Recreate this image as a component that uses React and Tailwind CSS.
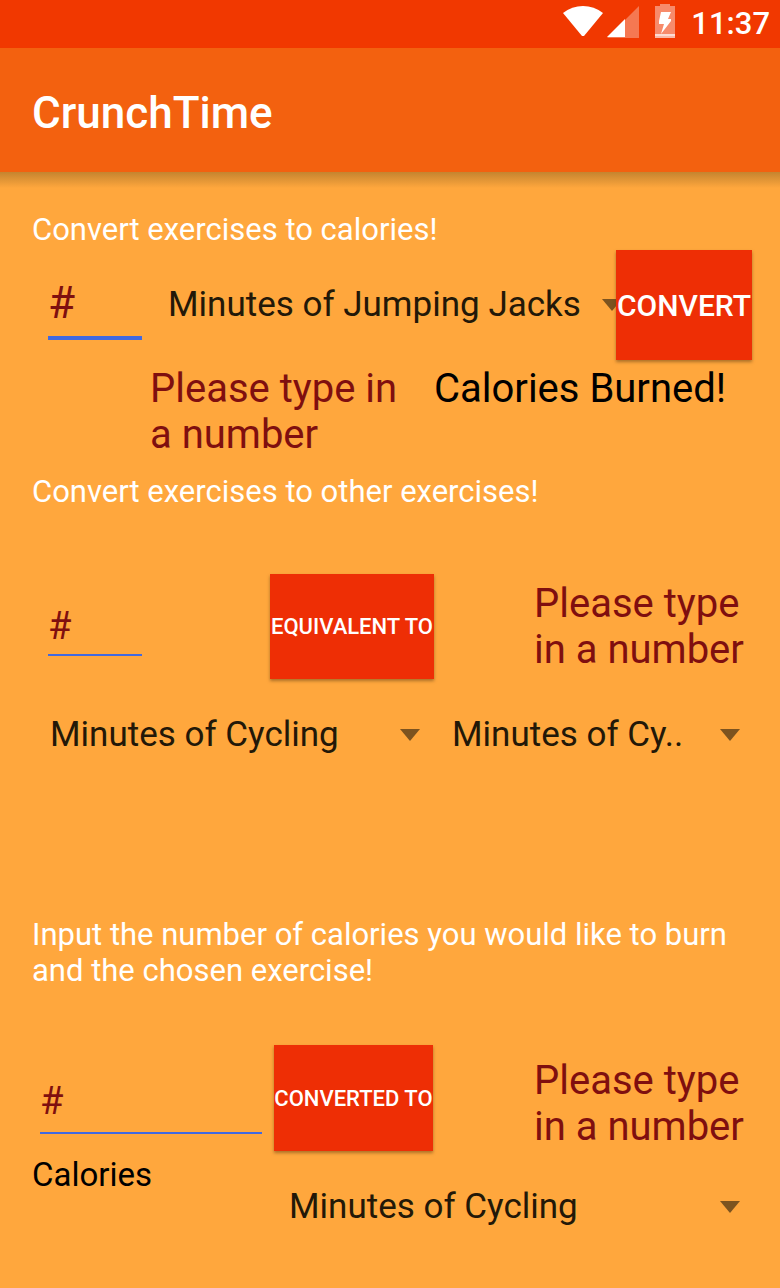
import React from "react";

function StatusBar() {
  return (
    <div className="flex h-12 items-center justify-end bg-[#f13800] pr-2.5 text-white">
      <svg className="h-9 w-10" viewBox="0 0 40 36" fill="#fff" aria-hidden="true">
        <path d="M0 7Q9 0 20 0T40 7L21 30H19Z" />
      </svg>
      <svg className="ml-1 h-9 w-8" viewBox="0 0 32 36" aria-hidden="true">
        <path d="M0 32L32 0V32Z" fill="#fff" fillOpacity="0.32" />
        <path d="M0 31L18 13V31Z" fill="#fff" />
      </svg>
      <svg className="ml-4 h-10 w-5" viewBox="0 0 20 40" aria-hidden="true">
        <path d="M5 2V0H15V2H20V34H0V2Z" fill="#fff" fillOpacity="0.42" />
        <path d="M0 30H20V32H0Z" fill="#fff" fillOpacity="0.7" />
        <path d="M0 32H20V34H0Z" fill="#fff" fillOpacity="0.4" />
        <path d="M6 8H16L13 15H16V17L6 30L9 20H4V17Z" fill="#fff" />
      </svg>
      <span className="ml-4 text-[31px] font-medium leading-9">11:37</span>
    </div>
  );
}

function Spinner({ label, options, className }) {
  return (
    <div className={`grid items-center ${className}`}>
      <select
        aria-label={label}
        className="col-start-1 row-start-1 h-12 w-full min-w-0 appearance-none bg-transparent text-[35px] leading-[48px] text-[#231808] outline-none"
      >
        {options.map((option) => (
          <option key={option}>{option}</option>
        ))}
      </select>
      <svg
        className="pointer-events-none col-start-1 row-start-1 h-3 w-5 justify-self-end"
        viewBox="0 0 20 12"
        fill="#7c531f"
        aria-hidden="true"
      >
        <path d="M0 0H20L10 12Z" />
      </svg>
    </div>
  );
}

function NumberField({ label, className }) {
  return (
    <input
      type="text"
      inputMode="numeric"
      aria-label={label}
      placeholder="#"
      className={`min-w-0 border-[#4169e1] bg-transparent text-[#7f0f0f] outline-none placeholder:text-[#7f0f0f] placeholder:opacity-100 ${className}`}
    />
  );
}

function ActionButton({ children, className }) {
  return (
    <button
      type="button"
      className={`shrink-0 whitespace-nowrap bg-[#ee2e05] font-medium text-white shadow-[0_2px_3px_rgba(90,60,20,0.5)] ${className}`}
    >
      {children}
    </button>
  );
}

export default function App() {
  return (
    <div className="min-h-screen bg-[#ffa73d] font-[Roboto,sans-serif]">
      <StatusBar />
      <header className="flex h-[124px] items-center bg-[#f3610f] px-8 pt-1.5">
        <h1 className="text-[44px] font-medium leading-[52px] text-white">CrunchTime</h1>
      </header>
      <div className="h-4 bg-linear-to-b from-[#c5842f] to-[#ffa73d]" />

      <main className="pb-14 pl-8 pr-7 pt-6">
        <section>
          <h2 className="text-[31px] leading-9 text-white">Convert exercises to calories!</h2>
          <div className="mt-0.5 flex items-center pl-4">
            <NumberField
              label="Minutes of exercise"
              className="h-[70px] w-[94px] border-b-4 text-[44px] leading-[60px]"
            />
            <Spinner
              label="Exercise"
              className="-mr-1.5 ml-[26px] min-w-0 flex-1"
              options={["Minutes of Jumping Jacks", "Minutes of Cycling"]}
            />
            <ActionButton className="relative h-[110px] w-[136px] text-[30px]">CONVERT</ActionButton>
          </div>
          <div className="mt-1.5 flex items-start pl-[118px] text-[40px] leading-[46px]">
            <output className="w-[284px] pr-8 text-[#7f0f0f]">Please type in a number</output>
            <p className="text-black">Calories Burned!</p>
          </div>
        </section>

        <section className="mt-4">
          <h2 className="text-[31px] leading-9 text-white">Convert exercises to other exercises!</h2>
          <div className="mt-16 flex items-center pl-4">
            <NumberField
              label="Minutes of first exercise"
              className="h-[59px] w-[94px] border-b-2 text-[38px] leading-[48px]"
            />
            <ActionButton className="ml-32 h-[105px] w-[164px] text-[22px]">EQUIVALENT TO</ActionButton>
            <output className="ml-[100px] flex-1 text-[40px] leading-[46px] text-[#7f0f0f]">
              Please type in a number
            </output>
          </div>
          <div className="mt-8 flex gap-8 pl-[18px] pr-3">
            <Spinner label="From exercise" className="w-[370px]" options={["Minutes of Cycling"]} />
            <Spinner label="To exercise" className="min-w-0 flex-1" options={["Minutes of Cy.."]} />
          </div>
        </section>

        <section className="mt-[158px]">
          <h2 className="text-[31px] leading-9 text-white">
            Input the number of calories you would like to burn and the chosen exercise!
          </h2>
          <div className="mt-14 flex items-center pl-2">
            <NumberField
              label="Calories"
              className="mt-2 h-[64px] w-[222px] border-b-2 text-[38px] leading-[48px]"
            />
            <ActionButton className="ml-3 h-[106px] w-[159px] text-[22px]">CONVERTED TO</ActionButton>
            <output className="ml-[101px] mt-3 flex-1 text-[40px] leading-[46px] text-[#7f0f0f]">
              Please type in a number
            </output>
          </div>
          <div className="flex pr-3">
            <p className="mt-1 w-[257px] text-[33px] leading-10 text-black">Calories</p>
            <Spinner label="Chosen exercise" className="mt-8 min-w-0 flex-1" options={["Minutes of Cycling"]} />
          </div>
        </section>
      </main>
    </div>
  );
}
